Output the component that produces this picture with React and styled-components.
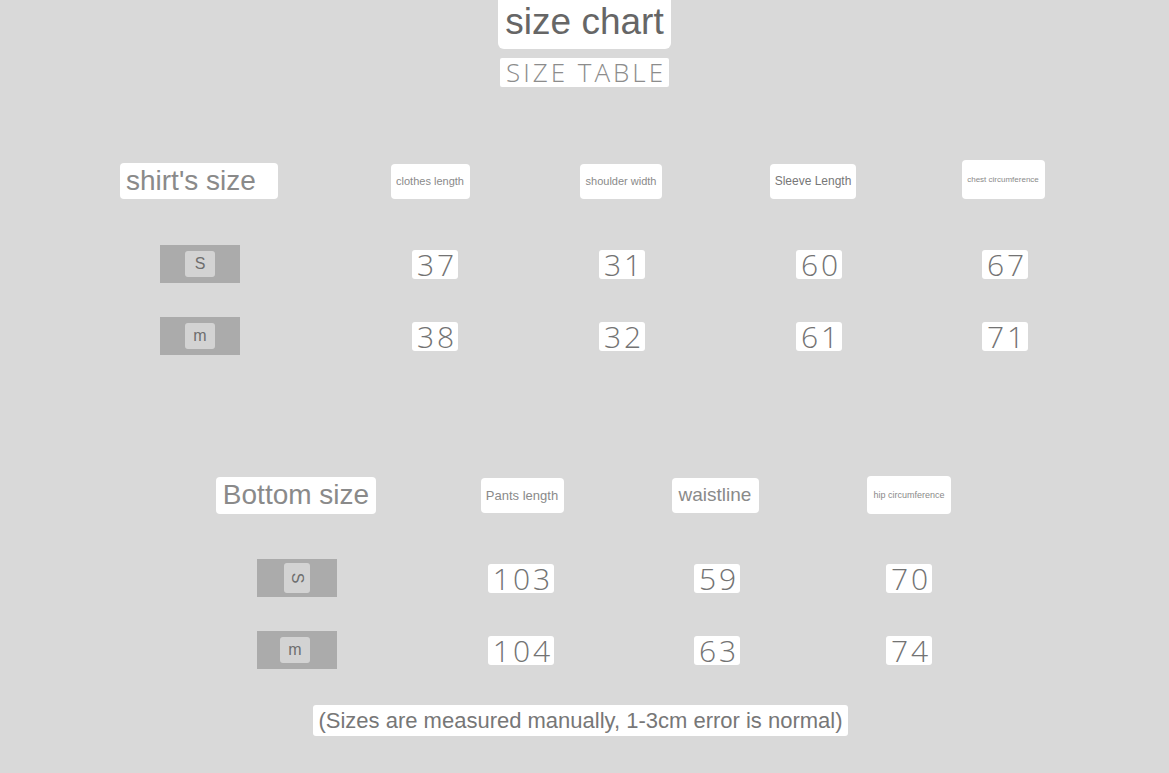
import React from 'react';
import styled, { createGlobalStyle } from 'styled-components';

const Global = createGlobalStyle`
  html, body {
    margin: 0;
    padding: 0;
    background: #d9d9d9;
  }
  body {
    font-family: "Liberation Sans", Arial, sans-serif;
  }
`

const Page = styled.div`
  width: 1169px;
  height: 773px;
  background: #d9d9d9;
  display: flex;
  flex-direction: column;
  overflow: hidden;
`

const Head = styled.div`
  display: flex;
  flex-direction: column;
  align-items: center;
`

const Title = styled.div`
  background: #fff;
  border-radius: 0 0 6px 6px;
  padding: 2px 7px 7px;
  line-height: 40px;
  font-size: 37px;
  color: #666;
`

const Subtitle = styled.div`
  margin-top: 9px;
  background: #fff;
  border-radius: 2px;
  height: 29px;
  line-height: 29px;
  padding: 0 3px 0 6px;
  font-family: "Open Sans", sans-serif;
  font-weight: 300;
  font-size: 26px;
  letter-spacing: 3px;
  color: #8c8c8c;
`

const Table = styled.div`
  display: grid;
  grid-template-columns: ${p => p.$cols};
  grid-template-rows: 94px 72px 72px;
  margin-left: ${p => p.$left}px;
  margin-top: ${p => p.$top}px;
  align-items: center;
  justify-items: center;
`

const Label = styled.div`
  background: #fff;
  border-radius: 4px;
  width: ${p => p.$w}px;
  height: ${p => p.$h}px;
  box-sizing: border-box;
  display: flex;
  align-items: center;
  justify-content: ${p => (p.$start ? 'flex-start' : 'center')};
  padding-left: ${p => (p.$start ? 6 : 0)}px;
  font-size: ${p => p.$fs}px;
  color: ${p => p.$color || '#8a8a8a'};
  white-space: nowrap;
  transform: translateY(${p => p.$dy || 0}px);
`

const SizeBox = styled.div`
  width: 80px;
  height: 38px;
  background: #ababab;
  display: flex;
  align-items: center;
  justify-content: center;
  transform: translateX(1px);
`

const SizeTag = styled.div`
  width: 30px;
  height: 26px;
  border-radius: 3px;
  background: #d3d3d3;
  display: flex;
  align-items: center;
  justify-content: center;
  font-size: 16px;
  color: #6e6e6e;
  transform: ${p => (p.$turn ? 'rotate(90deg)' : 'none')};
  margin-right: ${p => (p.$shift ? 4 : 0)}px;
`

const Num = styled.div`
  background: #fff;
  border-radius: 3px;
  height: 29px;
  line-height: 29px;
  padding: 0 1px 0 5px;
  font-family: "Open Sans", sans-serif;
  font-weight: 300;
  font-size: 30px;
  letter-spacing: 3px;
  color: #737373;
  transform: translateX(${p => p.$dx || 0}px);
`

const Note = styled.div`
  align-self: center;
  margin-top: 19px;
  margin-left: -8px;
  background: #fff;
  border-radius: 3px;
  height: 31px;
  line-height: 31px;
  padding: 0 5px;
  font-size: 22px;
  color: #777;
  white-space: nowrap;
`

const shirtHead = [
  { t: "shirt's size", w: 158, h: 36, fs: 28, start: true },
  { t: 'clothes length', w: 79, h: 35, fs: 11 },
  { t: 'shoulder width', w: 82, h: 35, fs: 11 },
  { t: 'Sleeve Length', w: 86, h: 35, fs: 12, color: '#777' },
  { t: 'chest circumference', w: 83, h: 39, fs: 8, dy: -2 },
]

const shirtRows = [
  { size: 'S', vals: ['37', '31', '60', '67'] },
  { size: 'm', vals: ['38', '32', '61', '71'] },
]

const bottomHead = [
  { t: 'Bottom size', w: 160, h: 37, fs: 28 },
  { t: 'Pants length', w: 83, h: 35, fs: 13 },
  { t: 'waistline', w: 87, h: 35, fs: 19 },
  { t: 'hip circumference', w: 84, h: 38, fs: 9 },
]

const bottomRows = [
  { size: 'S', turn: true, vals: ['103', '59', '70'] },
  { size: 'm', shift: true, vals: ['104', '63', '74'] },
]

function SizeTable({ cols, left, top, head, rows, nudge }) {
  return (
    <Table $cols={cols} $left={left} $top={top}>
      {head.map(h => (
        <Label key={h.t} $w={h.w} $h={h.h} $fs={h.fs} $start={h.start} $color={h.color} $dy={h.dy}>
          {h.t}
        </Label>
      ))}
      {rows.map(r => (
        <React.Fragment key={r.size}>
          <SizeBox>
            <SizeTag $turn={r.turn} $shift={r.shift}>{r.size}</SizeTag>
          </SizeBox>
          {r.vals.map((v, i) => (
            <Num key={i} $dx={nudge[i]}>{v}</Num>
          ))}
        </React.Fragment>
      ))}
    </Table>
  )
}

export default function App() {
  return (
    <Page>
      <Global />
      <Head>
        <Title>size chart</Title>
        <Subtitle>SIZE TABLE</Subtitle>
      </Head>
      <SizeTable
        cols="270px 192px 190px 194px 186px"
        left={64}
        top={47}
        head={shirtHead}
        rows={shirtRows}
        nudge={[5, 1, 6, 2]}
      />
      <SizeTable
        cols="260px 192px 194px 194px"
        left={166}
        top={76}
        head={bottomHead}
        rows={bottomRows}
        nudge={[-1, 2, 0]}
      />
      <Note>(Sizes are measured manually, 1-3cm error is normal)</Note>
    </Page>
  )
}
